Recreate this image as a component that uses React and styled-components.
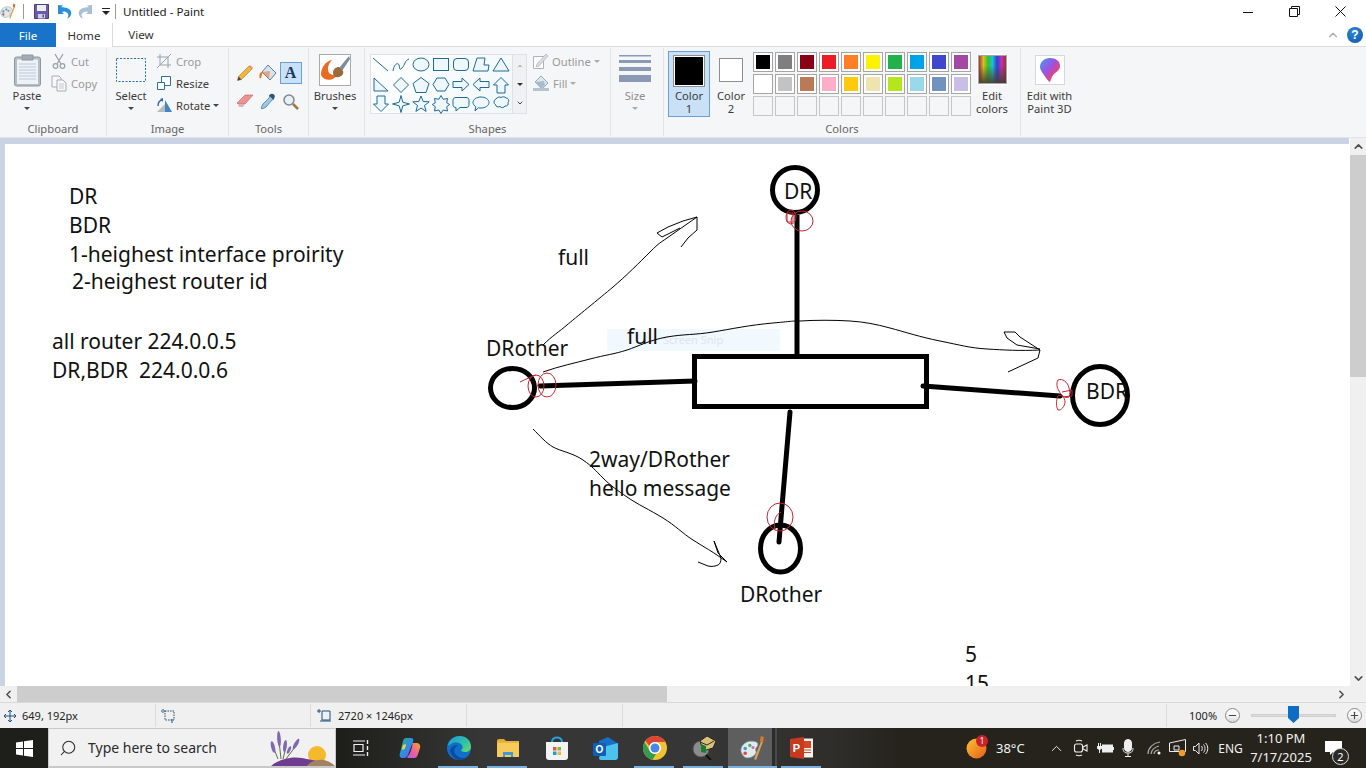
import React from "react";
import styled, { createGlobalStyle } from "styled-components";
import { ChevronUp, ChevronDown, ChevronLeft, ChevronRight, Search, Minus, Plus } from "lucide-react";

const GlobalStyle = createGlobalStyle`
  html, body { margin: 0; padding: 0; background: #fff; overflow: hidden; }
  * { box-sizing: border-box; }
  body { font-family: "Noto Sans", "Open Sans", sans-serif; font-size: 12px; color: #3b3b3b; }
`;

const UI = '"Noto Sans", "Open Sans", sans-serif';

const Window = styled.div`
  width: 1366px;
  height: 768px;
  display: flex;
  flex-direction: column;
  overflow: hidden;
`;

/* title bar */
const TitleBar = styled.div`
  height: 23px;
  display: flex;
  align-items: center;
  background: #fff;
  flex: none;
  overflow: hidden;
`;
const QuickIcon = styled.span`
  display: flex;
  width: ${(p) => p.$w}px;
  margin-left: ${(p) => p.$ml || 0}px;
  justify-content: ${(p) => (p.$clip ? "flex-end" : "center")};
  overflow: ${(p) => (p.$clip ? "hidden" : "visible")};
  flex: none;
`;
const QuickSep = styled.span`
  width: 1px;
  height: 15px;
  background: #9a9a9a;
  margin-left: ${(p) => p.$ml}px;
  flex: none;
`;
const WindowTitle = styled.span`
  margin-left: 7px;
  font-size: 11.6px;
  color: #1a1a1a;
`;
const WinControls = styled.div`
  margin-left: auto;
  padding-right: 3px;
  display: flex;
`;
const WinControl = styled.span`
  width: 46px;
  height: 23px;
  display: flex;
  align-items: center;
  justify-content: center;
`;

/* tabs */
const TabRow = styled.div`
  height: 24px;
  display: flex;
  align-items: stretch;
  background: #fff;
  border-bottom: 1px solid #dadbdc;
  flex: none;
`;
const FileTab = styled.div`
  width: 56px;
  background: #1873c9;
  color: #fff;
  display: flex;
  align-items: center;
  justify-content: center;
  margin-bottom: -1px;
  font-size: 11.6px;
`;
const Tab = styled.div`
  width: ${(p) => p.$w}px;
  display: flex;
  align-items: center;
  justify-content: center;
  color: #333;
  font-size: 11.6px;
  background: #fff;
  margin-bottom: ${(p) => (p.$active ? "-1px" : "0")};
  border-right: ${(p) => (p.$active ? "1px solid #dadbdc" : "0")};
  position: relative;
`;
const TabTools = styled.div`
  margin-left: auto;
  display: flex;
  align-items: center;
  gap: 7px;
  padding-right: 3px;
`;
const HelpBadge = styled.span`
  width: 16px;
  height: 16px;
  border-radius: 50%;
  background: radial-gradient(circle at 40% 30%, #2f86d8, #0c57a8);
  color: #fff;
  font: bold 12px "Liberation Sans", sans-serif;
  display: flex;
  align-items: center;
  justify-content: center;
`;

/* ribbon */
const Ribbon = styled.div`
  height: 91px;
  background: #f5f6f7;
  display: flex;
  flex: none;
  border-bottom: 1px solid #e2e4e7;
`;
const Group = styled.div`
  width: ${(p) => p.$w}px;
  flex: none;
  display: flex;
  flex-direction: column;
  border-right: ${(p) => (p.$plain ? "0" : "1px solid #e2e3e4")};
  margin: 1px 0;
`;
const GroupBody = styled.div`
  height: 71px;
  display: flex;
  position: relative;
`;
const GroupLabel = styled.div`
  text-align: center;
  font-size: 11.2px;
  color: #666;
  line-height: 14px;
  margin-top: 3px;
`;
const BigButton = styled.div`
  width: ${(p) => p.$w}px;
  margin-left: ${(p) => p.$ml || 0}px;
  flex: none;
  display: flex;
  flex-direction: column;
  align-items: center;
  font-size: 11.2px;
  line-height: 13px;
  color: ${(p) => (p.$muted ? "#8d8d8d" : "#3b3b3b")};
`;
const IconSlot = styled.div`
  height: 41px;
  padding-top: ${(p) => p.$pt || 0}px;
  display: flex;
  justify-content: center;
  flex: none;
`;
const Dropdown = styled.span`
  width: 0;
  height: 0;
  margin-top: ${(p) => p.$mt ?? 5}px;
  border: 3px solid transparent;
  border-top: 3px solid ${(p) => p.$color || "#444"};
  border-bottom: 0;
  display: inline-block;
  flex: none;
`;
const SmallStack = styled.div`
  display: flex;
  flex-direction: column;
  margin-left: ${(p) => p.$ml}px;
  margin-top: 2px;
`;
const SmallButton = styled.div`
  height: 22px;
  display: flex;
  align-items: center;
  gap: 3px;
  font-size: 11.2px;
  color: ${(p) => (p.$off ? "#9a9a9a" : "#3b3b3b")};
`;
const SmallIcon = styled.span`
  width: 18px;
  display: flex;
  justify-content: center;
  flex: none;
`;
const ToolGrid = styled.div`
  display: grid;
  grid-template-columns: repeat(3, 23px);
  grid-auto-rows: 28px;
  margin: 11px 0 0 4px;
  align-items: center;
  justify-items: center;
`;
const ToolCell = styled.div`
  width: 22px;
  height: 22px;
  display: flex;
  align-items: center;
  justify-content: center;
  border: 1px solid ${(p) => (p.$active ? "#6a9fd4" : "transparent")};
  background: ${(p) => (p.$active ? "#c9e0f7" : "transparent")};
`;
const ToolLetter = styled.span`
  font: bold 16px "Liberation Serif", serif;
  color: #17375e;
`;
const GalleryBox = styled.div`
  width: 157px;
  height: 60px;
  margin: 6px 0 0 5px;
  display: flex;
  border: 1px solid #dfe1e4;
  background: #fff;
  flex: none;
`;
const ShapeGrid = styled.div`
  width: 141px;
  display: grid;
  grid-template-columns: repeat(7, 20px);
  grid-auto-rows: 19.5px;
  background: linear-gradient(135deg, #fff, #f0f7fb);
`;
const GalleryScroll = styled.div`
  flex: 1;
  display: flex;
  flex-direction: column;
  align-items: center;
  justify-content: space-around;
  background: #f0f1f2;
  border-left: 1px solid #dfe1e4;
`;
const ShapeOptions = styled.div`
  margin: 2px 0 0 5px;
  display: flex;
  flex-direction: column;
`;
const ColorPick = styled.div`
  width: ${(p) => p.$w}px;
  height: 66px;
  margin-left: ${(p) => p.$ml}px;
  margin-top: 3px;
  flex: none;
  display: flex;
  flex-direction: column;
  align-items: center;
  text-align: center;
  border: 1px solid ${(p) => (p.$active ? "#6a9fd4" : "transparent")};
  background: ${(p) => (p.$active ? "#c9e0f7" : "transparent")};
  font-size: 11.2px;
  line-height: 13px;
  color: #3b3b3b;
  white-space: nowrap;
`;
const PickSwatch = styled.div`
  width: ${(p) => p.$s}px;
  height: ${(p) => p.$s}px;
  flex: none;
  margin: ${(p) => p.$m};
  background: ${(p) => p.$c};
  border: 1px solid #8e8e8e;
  ${(p) => p.$inset && "box-shadow: inset 0 0 0 1px #fff;"}
`;
const Palette = styled.div`
  display: grid;
  grid-template-columns: repeat(10, 20px);
  grid-auto-rows: 20px;
  gap: 2px;
  margin: 4px 0 0 10px;
  flex: none;
`;
const Swatch = styled.div`
  border: 1px solid ${(p) => (p.$empty ? "#c4c6c8" : "#a5a5a5")};
  background: ${(p) => (p.$empty ? "#f5f6f7" : "#fff")};
  padding: 2px;
  &::before {
    content: "";
    display: ${(p) => (p.$empty ? "none" : "block")};
    width: 100%;
    height: 100%;
    background: ${(p) => p.$c};
  }
`;
const RainbowBox = styled.div`
  width: 29px;
  height: 29px;
  border: 1px solid #a5a5a5;
  outline: 1px solid #fff;
  background:
    linear-gradient(180deg, transparent 35%, rgba(70, 60, 50, 0.9) 100%),
    linear-gradient(90deg, #b03030, #d8c020, #30c030, #20c0d0, #3040d8, #c030b0, #a03030);
`;
const CenterText = styled.div`
  text-align: center;
  font-size: 11.2px;
  line-height: 13px;
  color: #3b3b3b;
`;
const Paint3DBox = styled.div`
  width: 30px;
  height: 30px;
  border: 1px solid #d8d8d8;
  background: #fff;
  display: flex;
  align-items: center;
  justify-content: center;
`;

/* workspace */
const Workspace = styled.div`
  height: 548px;
  display: flex;
  flex: none;
  background: #c9d3e3;
`;
const CanvasView = styled.div`
  flex: 1;
  margin: 6px 0 0 5px;
  background: #fff;
  position: relative;
  overflow: hidden;
`;
const Sketch = styled.svg`
  position: absolute;
  left: 0;
  top: 0;
`;
const SnipToast = styled.div`
  position: absolute;
  left: ${607 - 5}px;
  top: ${329 - 144}px;
  width: 173px;
  height: 22px;
  background: #f1f8fe;
  color: #dbe6ef;
  font-size: 11px;
  line-height: 22px;
  padding-left: 56px;
`;
const CanvasText = styled.div`
  position: absolute;
  left: ${(p) => p.$x - 5}px;
  top: ${(p) => p.$y - 145}px;
  font-family: ${UI};
  font-size: 21px;
  line-height: 28px;
  color: #111;
  white-space: pre;
`;
const VScroll = styled.div`
  width: 17px;
  display: flex;
  flex-direction: column;
  background: #f0f0f0;
  border-left: 1px solid #fff;
  flex: none;
`;
const ScrollBtn = styled.div`
  flex: none;
  width: ${(p) => p.$w || 16}px;
  height: ${(p) => p.$h || 16}px;
  display: flex;
  align-items: center;
  justify-content: center;
  color: #505050;
`;
const VThumb = styled.div`
  height: 222px;
  background: #cdcdcd;
  flex: none;
`;
const Spring = styled.div`
  flex: 1;
`;
const HScroll = styled.div`
  height: 16px;
  flex: none;
  display: flex;
  background: #f0f0f0;
`;
const HThumb = styled.div`
  width: 650px;
  background: #cdcdcd;
  flex: none;
  margin-left: 1px;
`;

/* status bar */
const StatusBar = styled.div`
  height: 26px;
  flex: none;
  background: #f0f0f0;
  border-top: 1px solid #d9d9d9;
  display: flex;
  align-items: stretch;
  font-size: 11px;
  color: #222;
`;
const StatusCell = styled.div`
  width: ${(p) => p.$w}px;
  flex: none;
  display: flex;
  align-items: center;
  gap: 6px;
  padding-left: ${(p) => p.$pl || 0}px;
  margin: 1px 0;
  border-right: 1px solid #dcdcdc;
`;
const ZoomCell = styled.div`
  flex: 1;
  display: flex;
  align-items: center;
  padding-left: 22px;
`;
const ZoomCircle = styled.span`
  width: 15px;
  height: 15px;
  border-radius: 50%;
  border: 1px solid #8d8d8d;
  background: linear-gradient(180deg, #f8f8f8 50%, #d4d4d4);
  display: flex;
  align-items: center;
  justify-content: center;
  margin-left: ${(p) => p.$ml}px;
  flex: none;
  color: #444;
`;
const ZoomTrack = styled.div`
  width: 85px;
  height: 3px;
  margin-left: ${(p) => p.$ml}px;
  background: #dcdcdc;
  border: 1px solid #cfcfcf;
  position: relative;
  flex: none;
`;
const ZoomThumb = styled.svg`
  position: absolute;
  left: 36px;
  top: -9px;
`;

/* taskbar */
const Taskbar = styled.div`
  height: 40px;
  flex: none;
  display: flex;
  color: #f2f2f2;
  background: linear-gradient(90deg, #1e1e1a 0, #1e1e1a 340px, #363636 480px, #363636 700px, #2f2e2b 830px, #25231c 900px);
`;
const StartButton = styled.div`
  width: 48px;
  display: flex;
  align-items: center;
  justify-content: center;
  flex: none;
`;
const SearchBox = styled.div`
  width: 288px;
  flex: none;
  background: #f1f1f1;
  border: 1px solid #c8c8c8;
  border-bottom-width: 2px;
  display: flex;
  align-items: center;
  position: relative;
  overflow: hidden;
  color: #2b2b2b;
  font-size: 14px;
  padding-left: 10px;
  gap: 11px;
`;
const MirroredSearch = styled(Search)`
  transform: scaleX(-1);
`;
const SearchArt = styled.svg`
  position: absolute;
  left: 211px;
  top: 0;
`;
const TaskIcon = styled.div`
  width: 49px;
  flex: none;
  display: flex;
  align-items: center;
  justify-content: center;
  position: relative;
  background: ${(p) => (p.$active ? "linear-gradient(90deg, #5e5e5e 90%, #2c2c2c 90%, #2c2c2c 96%, #4a4a4a 96%)" : "transparent")};
  &::after {
    content: "";
    display: ${(p) => (p.$running ? "block" : "none")};
    position: absolute;
    left: ${(p) => (p.$active ? 0 : 4)}px;
    right: ${(p) => (p.$active ? 0 : 5)}px;
    bottom: 0;
    height: 2px;
    background: #76b0e4;
  }
`;
const Tray = styled.div`
  margin-left: auto;
  display: flex;
  align-items: stretch;
  flex: none;
`;
const TrayCell = styled.div`
  width: ${(p) => p.$w}px;
  flex: none;
  display: flex;
  align-items: center;
  justify-content: ${(p) => (p.$pl ? "flex-start" : "center")};
  font-size: ${(p) => p.$fs || 12}px;
  position: relative;
  text-align: center;
  line-height: 19px;
  padding-left: ${(p) => p.$pl || 0}px;
`;
const WeatherBadge = styled.span`
  position: absolute;
  left: 13px;
  top: 7px;
  width: 12px;
  height: 12px;
  border-radius: 50%;
  background: #c8252b;
  color: #fff;
  font-size: 8px;
  line-height: 12px;
  text-align: center;
`;
const NotifyBadge = styled.span`
  position: absolute;
  left: 16px;
  top: 20px;
  width: 17px;
  height: 17px;
  border-radius: 50%;
  background: #2b2a26;
  border: 1px solid #ddd;
  color: #fff;
  font-size: 11px;
  line-height: 15px;
  text-align: center;
`;

/* icons */
const PaletteIcon = ({ s = 24 }) => (
  <svg width={s} height={s} viewBox="0 0 24 24">
    <path d="M1 15c-1-5 4-10 9-10 3 0 6 0 7 2 1 3-2 4-2 6s1 2 0 4c-2 3-5 4-8 4-3 0-5-3-6-6z" fill="#dfe9ee" stroke="#7c97a8" strokeWidth=".7" />
    <circle cx="5" cy="12" r="1.700" fill="#3f9bd6" />
    <circle cx="9.500" cy="9" r="1.600" fill="#53b153" />
    <circle cx="5" cy="16.500" r="1.700" fill="#d84a3d" />
    <circle cx="12.500" cy="11" r="1.500" fill="#d56ab0" />
    <path d="M21 3l1.500 1-7 19-2-1z" fill="#e0a050" />
    <path d="M20 0l3 1-1 5-3-1z" fill="#d97832" />
  </svg>
);
const SaveIcon = () => (
  <svg width="15" height="15" viewBox="0 0 15 15">
    <path d="M.5.500h14v14H.5z" fill="#6f5aa5" stroke="#4d3d85" />
    <path d="M3 1h9v6H3z" fill="#e9eef5" />
    <path d="M4 10h7v4.500H4z" fill="#cfd0e6" />
    <path d="M8.500 10.500h1.500v3H8.500z" fill="#5b4b94" />
  </svg>
);
const UndoIcon = ({ color, flip }) => (
  <svg width="15" height="15" viewBox="0 0 15 15" transform={flip ? "scale(-1 1)" : undefined}>
    <path d="M1 1l5 .5-1.700 1.700C5.500 3 12 3 14 7.500c1 3-1 6-4 7 1.500-2 2-4 .5-5.500C9 7.500 6.500 7 5 8L7 10H1z" fill={color} />
  </svg>
);
const CutIcon = () => (
  <svg width="14" height="16" viewBox="0 0 14 16" fill="none" stroke="#98a3ad" strokeWidth="1.300">
    <path d="M3 1l6 10M11 1L5 11" />
    <circle cx="3.500" cy="13" r="2.300" />
    <circle cx="10.500" cy="13" r="2.300" />
  </svg>
);
const CopyIcon = () => (
  <svg width="16" height="17" viewBox="0 0 16 17" fill="#f8f8f8" stroke="#a7adb3">
    <path d="M1 1h7l2 2v9H1z" />
    <path d="M6 5h6l3 3v8H6z" />
    <path d="M8 9h5M8 11h5M8 13h5" stroke="#c4c8cc" />
  </svg>
);
const CropIcon = () => (
  <svg width="16" height="16" viewBox="0 0 16 16" fill="none" stroke="#98a3ad">
    <path d="M4 1v11h11M1 4h11v11M1 15L15 1" />
  </svg>
);
const ResizeIcon = () => (
  <svg width="16" height="16" viewBox="0 0 16 16" fill="#fff" stroke="#2e6ea6">
    <path d="M5.500 1.500h9v9h-9z" />
    <path d="M1.500 7.500h7v7h-7z" />
  </svg>
);
const RotateIcon = () => (
  <svg width="17" height="16" viewBox="0 0 17 16">
    <path d="M9 3l7 12H9z" fill="#3f87c4" />
    <path d="M1 15l8-8v8z" fill="#b8bcc0" />
    <path d="M2 9c0-4 2-6 5-6" stroke="#2e6ea6" fill="none" strokeWidth="1.400" />
    <path d="M4 2l3-1v4z" fill="#2e6ea6" />
  </svg>
);
const PasteIcon = () => (
  <svg width="27" height="33" viewBox="0 0 27 33">
    <rect x=".5" y="3" width="26" height="29" rx="2" fill="#b4bcc6" stroke="#8f98a3" />
    <rect x="3" y="5.500" width="21" height="24.500" fill="#eef2f7" />
    <path d="M5 10h17M5 13h17M5 16h17M5 19h17M5 22h17M5 25h17" stroke="#bcc8d8" />
    <path d="M8 1h11v5H8z" fill="#a2abb6" stroke="#8f98a3" />
  </svg>
);
const PencilIcon = () => (
  <svg width="18" height="18" viewBox="0 0 18 18">
    <path d="M13 2l3 3L5.500 15.500 1.500 16.500l1-4z" fill="#efb540" stroke="#a87a1f" strokeWidth=".6" />
    <path d="M13 2l1-1 3 3-1 1z" fill="#e58a80" />
    <path d="M1.500 16.500l1-4 3 3z" fill="#4a4a4a" />
  </svg>
);
const FillIcon = () => (
  <svg width="18" height="18" viewBox="0 0 18 18">
    <path d="M9 1l8 8-6 7-8-8z" fill="#d5e3ee" stroke="#5b7f9c" />
    <path d="M3 8c-2 0-3 2-2.500 6 1 1 2 0 2-2l1-3z" fill="#e8742c" />
    <path d="M3 8l8-1-1 8z" fill="#e8742c" opacity=".55" />
  </svg>
);
const EraserIcon = () => (
  <svg width="18" height="16" viewBox="0 0 18 16">
    <path d="M1 10l8-8h8l-8 9H2z" fill="#ee9393" stroke="#c45c5c" strokeWidth=".6" />
    <path d="M2 11h7l-2 3H3z" fill="#d8b6b6" />
  </svg>
);
const PickerIcon = () => (
  <svg width="17" height="17" viewBox="0 0 17 17">
    <path d="M11 2l4 4-2 1-6 7-4 2-1-1 2-4 6-6z" fill="#9cc8e6" stroke="#3c6f95" strokeWidth=".7" />
    <path d="M11 1.500c1-1 3-1 4 0s1 3 0 4l-1 1-4-4z" fill="#28567a" />
  </svg>
);
const LensIcon = () => (
  <svg width="17" height="17" viewBox="0 0 17 17" fill="none">
    <circle cx="7" cy="7" r="5" fill="#e7f0f7" stroke="#808890" strokeWidth="1.500" />
    <path d="M11 11l5 5" stroke="#a07840" strokeWidth="2.500" />
  </svg>
);
const BrushesIcon = () => (
  <svg width="32" height="32" viewBox="0 0 32 32">
    <rect x=".5" y=".5" width="31" height="31" fill="#fff" stroke="#a9a9a9" />
    <path d="M2 21c0-8 5-14 11-15-4 4-5 9-3 13 4 3 6 2 9 1-3 6-13 9-17 1z" fill="#ea6a22" />
    <path d="M30 2L20 14l3 3L31 5z" fill="#7d8da0" />
    <path d="M20 13c-3 0-6 2-6 6 0 3 3 5 6 4 3-1 5-3 4-6z" fill="#9a6a3c" />
  </svg>
);
const ShapeSvg = ({ children }) => (
  <svg width="20" height="20" viewBox="0 0 20 20" fill="#eef7fc" stroke="#1f6a96" strokeWidth="1">
    {children}
  </svg>
);
const SHAPES = [
  <path d="M2 3l15 13" fill="none" />,
  <path d="M2 16c1-7 5-9 6-6s0 6 3 3 3-8 7-9" fill="none" />,
  <ellipse cx="10" cy="9.500" rx="8" ry="6.500" />,
  <rect x="2.500" y="3.500" width="15" height="12" />,
  <rect x="2.500" y="3.500" width="15" height="12" rx="3.500" />,
  <path d="M2 16l4-13h8l-1 7h5l-1 6z" />,
  <path d="M10 3l8 13H2z" />,
  <path d="M3 3l14 13H3z" />,
  <path d="M10 2.500l7.500 7.500-7.500 7.500L2.500 10z" />,
  <path d="M10 2.500l8 6-3 9H5l-3-9z" />,
  <path d="M6 3h8l4 6.500-4 6.500H6L2 9.500z" />,
  <path d="M2 6.500h9V3l7 6.500-7 6.500v-3.500H2z" />,
  <path d="M18 6.500H9V3L2 9.500 9 16v-3.500h9z" />,
  <path d="M6 18V10H2.500L10 2.500 17.500 10H14v8z" />,
  <path d="M6 2v8H2.500l7.500 7.500 7.500-7.500H14V2z" />,
  <path d="M10 1.500l1.800 6.700 6.700 1.800-6.700 1.800L10 18.500l-1.800-6.700L1.500 10l6.700-1.800z" />,
  <path d="M10 2l2.200 5.500 6 .3-4.700 3.700 1.600 5.900-5.100-3.300-5.100 3.300 1.600-5.900L1.800 7.800l6-.3z" />,
  <path d="M10 1.500l2.200 3.800 4.300-.8-.8 4.300 3 1.700-3 2.200.8 4.300-4.300-1-2.200 3.500-2.200-3.500-4.300 1 .8-4.300-3-2.200 3-1.700-.8-4.300 4.300.8z" />,
  <path d="M5 3.500h10c2 0 3 1 3 3v4c0 2-1 3-3 3H9l-4 3.500v-3.500c-2 0-3-1-3-3v-4c0-2 1-3 3-3z" />,
  <path d="M10 3c4.500 0 8 2.500 8 5.500S14.500 14 10 14c-1 0-1.500 0-2.500-.3L4 17l.8-4.300C3 11.500 2 10 2 8.500 2 5.500 5.500 3 10 3z" />,
  <path d="M5 5c1-2 4-2.500 5-1.500 1.500-1 4-1 5 .5 2.500 0 3.500 3 2 4.500 1 2-1 4-3 3.500-1 2-4 2-5 .5-2 1-4.500 0-4.500-2C2.500 10 2.500 6 5 5z" />,
];
const OutlineIcon = () => (
  <svg width="17" height="17" viewBox="0 0 17 17">
    <path d="M1.500 3.500h10v12h-10z" fill="#fff" stroke="#adb4bb" />
    <path d="M14 1l2 2-9 10-3 1 1-3z" fill="#d8dde2" stroke="#a0a8b0" strokeWidth=".6" />
  </svg>
);
const FillShapeIcon = () => (
  <svg width="18" height="17" viewBox="0 0 18 17">
    <path d="M9 1l7 7-6 6-7-7z" fill="#dce6ee" stroke="#96a9b8" />
    <path d="M1 13h16v3H1z" fill="#b5c4d2" />
    <path d="M3 7l9-1 1 4-4 4z" fill="#a8bccd" />
  </svg>
);
const Paint3DIcon = () => (
  <svg width="22" height="26" viewBox="0 0 22 26">
    <defs>
      <linearGradient id="p3d" x1="0" y1="0" x2="1" y2="1">
        <stop offset="0" stopColor="#3aa0f0" />
        <stop offset=".45" stopColor="#a050e0" />
        <stop offset=".75" stopColor="#f0406a" />
        <stop offset="1" stopColor="#f5b030" />
      </linearGradient>
    </defs>
    <path d="M11 1C5 1 1 5 1 10c0 3 2 5 4 8s4 6 6 7c1-3 2-6 4-8s6-4 6-8c0-5-4-8-10-8z" fill="url(#p3d)" />
  </svg>
);

const WinLogo = () => (
  <svg width="17" height="17" viewBox="0 0 17 17" fill="#fff">
    <path d="M0 2.400L7 1.400V8H0zM8 1.300L17 0v8H8zM0 9h7v6.600L0 14.600zM8 9h9v8l-9-1.300z" />
  </svg>
);
const LavenderArt = () => (
  <SearchArt width="76" height="38" viewBox="0 0 76 38">
    <circle cx="57" cy="26" r="9" fill="#f4b92c" />
    <path d="M10 38c8-8 22-11 32-9 10 2 24 4 34 9z" fill="#6f3c92" />
    <path d="M46 38c4-6 12-8 18-7 5 1 9 4 12 7z" fill="#a3835f" />
    <path d="M18 30l-4-10M21 30l-2-18M23 30l3-12M26 30l12-16" stroke="#5f6f4a" fill="none" />
    <g fill="#7f69b4">
      <ellipse cx="13" cy="18" rx="1.900" ry="6" transform="rotate(-14 13 18)" />
      <ellipse cx="19" cy="10" rx="1.800" ry="8" transform="rotate(-4 19 10)" />
      <ellipse cx="25" cy="17" rx="1.800" ry="6" transform="rotate(8 25 17)" />
      <ellipse cx="36" cy="15" rx="1.800" ry="6" transform="rotate(30 36 15)" />
      <ellipse cx="29" cy="21" rx="1.500" ry="4" transform="rotate(24 29 21)" />
    </g>
  </SearchArt>
);
const TaskViewIcon = () => (
  <svg width="16" height="16" viewBox="0 0 16 16" fill="none" stroke="#f0f0f0" strokeWidth="1.200">
    <path d="M0 1h12M0 15h12M1 4.500h9v7H1z" />
    <path d="M14.500 0v4M14.500 6v4M14.500 12v4" strokeWidth="1.400" />
  </svg>
);
const CopilotIcon = () => (
  <svg width="22" height="22" viewBox="0 0 22 22">
    <defs>
      <linearGradient id="cpA" x1="0" y1="0" x2="1" y2="1">
        <stop offset="0" stopColor="#2fb06a" />
        <stop offset=".5" stopColor="#2b8fe8" />
        <stop offset="1" stopColor="#7a55d8" />
      </linearGradient>
      <linearGradient id="cpB" x1="1" y1="0" x2="0" y2="1">
        <stop offset="0" stopColor="#f5a623" />
        <stop offset=".55" stopColor="#ef5fa0" />
        <stop offset="1" stopColor="#b25ae0" />
      </linearGradient>
    </defs>
    <path d="M7 1h5c2 0 3 2 2 4L9 18c-1 2-2 3-4 3H4c-3 0-4-2-3-5L4 4c.5-2 1.500-3 3-3z" fill="url(#cpA)" />
    <path d="M13 6h4c3 0 5 2 4 5l-2 6c-1 3-2 4-4 4H9c-1 0-1-1 0-2 2-2 3-6 4-9l.5-3z" fill="url(#cpB)" />
    <path d="M4 8c2-1 3-1 3 0l-1 3c-1 2-3 2-3 1z" fill="#f3d33a" />
  </svg>
);
const EdgeIcon = () => (
  <svg width="24" height="24" viewBox="0 0 24 24">
    <defs>
      <linearGradient id="edgeTop" x1="0" y1="0" x2="1" y2="1">
        <stop offset="0" stopColor="#1b9ad6" />
        <stop offset=".6" stopColor="#33c4a0" />
        <stop offset="1" stopColor="#6fdc60" />
      </linearGradient>
    </defs>
    <circle cx="12" cy="12" r="12" fill="#0f6fcb" />
    <path d="M1 9C3 3 8 0 13 0c6 0 11 4 11 11 0 3-3 5-6 5-2 0-4-1-4-2 2-1 2-3 1-5-2-3-8-4-11-1-2 1-3 2-3 1z" fill="url(#edgeTop)" />
    <path d="M9 19c-3-3-2-8 2-10-4 0-7 2-8 6 1 4 5 9 10 9 3 0 5-1 7-3-4 2-8 1-11-2z" fill="#0c4a9c" />
  </svg>
);
const FolderIcon = () => (
  <svg width="22" height="18" viewBox="0 0 22 18">
    <path d="M0 2c0-1 .5-2 2-2h5l2 2H0z" fill="#e0a92c" />
    <path d="M0 2h22v16H0z" fill="#f6cb5a" />
    <path d="M6 13h10v5h-2v-2H8v2H6z" fill="#3d9ad8" />
    <path d="M0 2h22v2H0z" fill="#e8b33c" />
  </svg>
);
const StoreIcon = () => (
  <svg width="24" height="24" viewBox="0 0 24 24">
    <path d="M7 6c0-6 10-6 10 0" fill="none" stroke="#27a4d8" strokeWidth="2" />
    <path d="M1 6h22v15c0 2-1 3-3 3H4c-2 0-3-1-3-3z" fill="#f3f3f3" />
    <path d="M8 11h3.500v3.500H8z" fill="#e85c3a" />
    <path d="M12.500 11H16v3.500h-3.500z" fill="#7fba3c" />
    <path d="M8 15.500h3.500V19H8z" fill="#1d9ae0" />
    <path d="M12.500 15.500H16V19h-3.500z" fill="#f5b82a" />
  </svg>
);
const OutlookIcon = () => (
  <svg width="25" height="23" viewBox="0 0 25 23">
    <path d="M6 4l9-4 9 6v13H6z" fill="#1770c8" />
    <path d="M10 10l15-4v14c0 2-1 3-3 3H8c-1 0-2-1-2-2z" fill="#4cc2ee" />
    <rect x="0" y="6" width="13" height="13" rx="1" fill="#0e5fb4" />
    <text x="6.500" y="16" textAnchor="middle" fontFamily="Liberation Sans" fontSize="10" fontWeight="700" fill="#fff">O</text>
  </svg>
);
const ChromeIcon = () => (
  <svg width="24" height="24" viewBox="0 0 24 24">
    <circle cx="12" cy="12" r="12" fill="#f0c22e" />
    <path d="M12 0a12 12 0 0 1 10.400 6H12a6 6 0 0 0-5.600 4L2.300 4.800A12 12 0 0 1 12 0z" fill="#db4437" />
    <path d="M1.500 6L6.800 15a6 6 0 0 0 6.200 3l-3.600 5.700A12 12 0 0 1 1.500 6z" fill="#2f9e4f" />
    <circle cx="12" cy="12" r="6" fill="#fff" />
    <circle cx="12" cy="12" r="4.500" fill="#4a86e8" />
  </svg>
);
const ScannerIcon = () => (
  <svg width="24" height="24" viewBox="0 0 24 24">
    <circle cx="9" cy="13" r="8" fill="#8c8c8c" stroke="#555" />
    <path d="M8 5l7-5 9 5-3 7-10 3z" fill="#d9c07c" stroke="#2a2a1c" />
    <path d="M8 6l7 3 7-4" fill="none" stroke="#2a2a1c" />
    <path d="M9 8l5 2v7l-5-1z" fill="#1d7b32" />
    <path d="M14 19l5 5" stroke="#111" strokeWidth="2" />
  </svg>
);
const PptIcon = () => (
  <svg width="23" height="22" viewBox="0 0 23 22">
    <rect x="8" y="1.500" width="15" height="19" fill="#f4f0ee" />
    <path d="M14 4h7v7h-7z" fill="#d24726" />
    <path d="M14 13h7M14 15.500h7" stroke="#d24726" />
    <path d="M0 2l14-2v22L0 20z" fill="#c8391d" />
    <text x="6.500" y="15" textAnchor="middle" fontFamily="Liberation Sans" fontSize="11" fontWeight="700" fill="#fff">P</text>
  </svg>
);
const MeetIcon = () => (
  <svg width="16" height="18" viewBox="0 0 16 18" fill="none" stroke="#eee" strokeWidth="1.100">
    <rect x="1.500" y="5" width="8" height="8" rx="2" />
    <path d="M10 8l4-2v6l-4-2zM3 2c2-1 4-1 6 0M3 16c2 1 4 1 6 0" />
  </svg>
);
const PowerIcon = () => (
  <svg width="17" height="12" viewBox="0 0 17 12" fill="#eee">
    <path d="M5 2.500h11v8H5zM16 5h1v3h-1z" />
    <path d="M0 4h1V1h1v3h1V1h1v3h1v2.500L3 8v3H2V8L0 6.500z" />
  </svg>
);
const MicIcon = () => (
  <svg width="12" height="18" viewBox="0 0 12 18" fill="none" stroke="#eee">
    <rect x="2.500" y="0.500" width="7" height="12" rx="3.500" fill="#eee" />
    <path d="M1 9c0 4 2 5 5 5s5-1 5-5M6 14v3M3 17.500h6" />
  </svg>
);
const WifiIcon = () => (
  <svg width="15" height="14" viewBox="0 0 15 14" fill="none" stroke="#aaa" strokeWidth="1.200">
    <path d="M1 13C1 7 6 2 13 1M4 13c0-4 4-7 8-8M7 13c0-2 2-4 5-4" />
    <circle cx="12" cy="12" r="1.500" fill="#fff" stroke="none" />
  </svg>
);
const MonitorIcon = () => (
  <svg width="18" height="19" viewBox="0 0 18 19">
    <path d="M.5 4L16.500.5v12H.5z" fill="none" stroke="#eee" />
    <path d="M5 7h5v4H5z" fill="none" stroke="#eee" />
    <circle cx="13" cy="14" r="3.300" fill="#f59a23" />
  </svg>
);
const VolumeIcon = () => (
  <svg width="16" height="13" viewBox="0 0 16 13" fill="none" stroke="#eee">
    <path d="M.5 4.500h2L6 1v11L2.500 8.500h-2zM8.500 4c1 1 1 4 0 5M10.500 2.500c2 2 2 6 0 8M12.500 1c3 3 3 8 0 11" />
  </svg>
);

const PALETTE = [
  "#000000", "#7f7f7f", "#880015", "#ed1c24", "#ff7f27", "#fff200", "#22b14c", "#00a2e8", "#3f48cc", "#a349a4",
  "#ffffff", "#c3c3c3", "#b97a57", "#ffaec9", "#ffc90e", "#efe4b0", "#b5e61d", "#99d9ea", "#7092be", "#c8bfe7",
];

const RED = "#c5262d";

const Drawing = () => (
  <Sketch width="1344" height="542" viewBox="5 144 1344 542">
    <g fill="none" stroke="#000" strokeWidth="5">
      <circle cx="795" cy="190" r="22.500" />
      <path d="M797 215V357" />
      <rect x="694.500" y="356.500" width="232" height="50" />
      <ellipse cx="512.500" cy="388" rx="22" ry="19.500" />
      <path d="M540 386L695 381" strokeLinecap="round" />
      <ellipse cx="1100" cy="395.500" rx="27.500" ry="29" />
      <path d="M923 386L1060 396" strokeLinecap="round" />
      <path d="M790 412L779 542" strokeLinecap="round" />
      <ellipse cx="780.500" cy="548.500" rx="20" ry="23.500" />
    </g>
    <g fill="none" stroke="#000" strokeWidth="1" strokeLinejoin="round">
      <path d="M543 345C552 336 560 331 567 325S600 298 613 287S640 262 650 252S660 243 667 238L697 217V230L688 238L681 247" />
      <path d="M697 217L683 221L668 227L657 233L662 237L680 228" />
      <path d="M543 372C560 366 575 363 590 359S615 354 627 350S650 340 667 337S695 335 713 332S750 325 773 323S790 321 800 321C815 320 835 320 850 321S875 324 890 328S920 337 940 341S970 348 987 349S1020 351 1040 350" />
      <path d="M1040 350L1020 337L1015 332H1004L1007 338L1017 345L1040 349M1040 350L1038 358L1008 372" />
      <path d="M533 429C540 436 546 443 553 447S573 453 583 460S595 470 603 478S617 490 627 497S650 510 663 518S682 533 693 540S708 549 717 555L727 562L718 553L714 541L721 558C721 562 720 564 718 565S712 567 708 566L698 562" />
    </g>
    <g fill="none" stroke={RED} strokeWidth="1">
      <ellipse cx="547" cy="385" rx="9" ry="12" />
      <ellipse cx="536" cy="386" rx="8" ry="11" />
      <path d="M520 382C526 379 531 377 536 375" />
      <ellipse cx="802" cy="221" rx="11" ry="10" />
      <ellipse cx="791" cy="217" rx="5" ry="7" />
      <path d="M787 213h6v9h-6z" />
      <ellipse cx="780" cy="517" rx="13" ry="14" />
      <path d="M775 530c-2-8 0-15 6-18" />
      <path d="M1058 380c4-2 10 2 11 8 1 3 1 6 0 9-4 2-8-2-10-6-2-3-3-8-1-11z" />
      <path d="M1058 396c3-2 7 1 7 6 0 4-4 9-7 8-2-3-2-10 0-14zM1062 392l10-2v6l-10 1" />
    </g>
  </Sketch>
);

const CANVAS_TEXT = [
  ["DR", 69, 183], ["BDR", 69, 212], ["1-heighest interface proirity", 69, 241], ["2-heighest router id", 72, 268],
  ["all router 224.0.0.5", 52, 328], ["DR,BDR  224.0.0.6", 52, 357], ["full", 558, 244], ["full", 627, 323],
  ["DRother", 486, 335], ["DR", 784, 178], ["BDR", 1086, 378], ["2way/DRother", 589, 446], ["hello message", 589, 475],
  ["DRother", 740, 581], ["5", 965, 641], ["15", 965, 670],
];

export default function App() {
  return (
    <Window>
      <GlobalStyle />
      <TitleBar>
        <QuickIcon $w={16} $clip><PaletteIcon s={19} /></QuickIcon>
        <QuickSep $ml={7} />
        <QuickIcon $w={15} $ml={10}><SaveIcon /></QuickIcon>
        <QuickIcon $w={15} $ml={8}><UndoIcon color="#2a8fd8" /></QuickIcon>
        <QuickIcon $w={15} $ml={6}><UndoIcon color="#a9bfd2" flip /></QuickIcon>
        <QuickIcon $w={10} $ml={8}>
          <svg width="8" height="7" viewBox="0 0 8 7"><path d="M0 0h8v1H0zM0 3h8L4 7z" fill="#222" /></svg>
        </QuickIcon>
        <QuickSep $ml={4} />
        <WindowTitle>Untitled - Paint</WindowTitle>
        <WinControls>
          <WinControl>
            <svg width="10" height="10" viewBox="0 0 10 10"><path d="M0 5.500h10" stroke="#111" /></svg>
          </WinControl>
          <WinControl>
            <svg width="11" height="11" viewBox="0 0 11 11" fill="none" stroke="#111"><path d="M.5 2.500h8v8h-8zM2.500 2.500v-2h8v8h-2" /></svg>
          </WinControl>
          <WinControl>
            <svg width="11" height="11" viewBox="0 0 11 11" stroke="#111"><path d="M.5.500l10 10M10.500.500l-10 10" /></svg>
          </WinControl>
        </WinControls>
      </TitleBar>

      <TabRow>
        <FileTab>File</FileTab>
        <Tab $w={57} $active>Home</Tab>
        <Tab $w={56}>View</Tab>
        <TabTools>
          <ChevronUp size={14} color="#aaa" />
          <HelpBadge>?</HelpBadge>
        </TabTools>
      </TabRow>

      <Ribbon>
        <Group $w={107}>
          <GroupBody>
            <BigButton $w={54}>
              <IconSlot $pt={6}><PasteIcon /></IconSlot>
              Paste
              <Dropdown />
            </BigButton>
            <SmallStack $ml={-4}>
              <SmallButton $off><SmallIcon><CutIcon /></SmallIcon>Cut</SmallButton>
              <SmallButton $off><SmallIcon><CopyIcon /></SmallIcon>Copy</SmallButton>
            </SmallStack>
          </GroupBody>
          <GroupLabel>Clipboard</GroupLabel>
        </Group>
        <Group $w={122}>
          <GroupBody>
            <BigButton $w={40} $ml={4}>
              <IconSlot $pt={10}>
                <svg width="30" height="24" viewBox="0 0 30 24" fill="none"><rect x=".5" y=".5" width="29" height="23" stroke="#2e6ea6" strokeDasharray="2 1.500" /></svg>
              </IconSlot>
              Select
              <Dropdown />
            </BigButton>
            <SmallStack $ml={4}>
              <SmallButton $off><SmallIcon><CropIcon /></SmallIcon>Crop</SmallButton>
              <SmallButton><SmallIcon><ResizeIcon /></SmallIcon>Resize</SmallButton>
              <SmallButton>
                <SmallIcon><RotateIcon /></SmallIcon>Rotate
                <Dropdown $mt={0} />
              </SmallButton>
            </SmallStack>
          </GroupBody>
          <GroupLabel>Image</GroupLabel>
        </Group>
        <Group $w={80}>
          <GroupBody>
            <ToolGrid>
              <ToolCell><PencilIcon /></ToolCell>
              <ToolCell><FillIcon /></ToolCell>
              <ToolCell $active><ToolLetter>A</ToolLetter></ToolCell>
              <ToolCell><EraserIcon /></ToolCell>
              <ToolCell><PickerIcon /></ToolCell>
              <ToolCell><LensIcon /></ToolCell>
            </ToolGrid>
          </GroupBody>
          <GroupLabel>Tools</GroupLabel>
        </Group>
        <Group $w={56}>
          <GroupBody>
            <BigButton $w={52}>
              <IconSlot $pt={6}><BrushesIcon /></IconSlot>
              Brushes
              <Dropdown />
            </BigButton>
          </GroupBody>
        </Group>
        <Group $w={246}>
          <GroupBody>
            <GalleryBox>
              <ShapeGrid>
                {SHAPES.map((s, i) => <ShapeSvg key={i}>{s}</ShapeSvg>)}
              </ShapeGrid>
              <GalleryScroll>
                <ChevronUp size={8} color="#bbb" fill="#bbb" strokeWidth={3} />
                <Dropdown $mt={0} $color="#333" />
                <ChevronDown size={8} color="#444" strokeWidth={3} />
              </GalleryScroll>
            </GalleryBox>
            <ShapeOptions>
              <SmallButton $off>
                <OutlineIcon />Outline<Dropdown $mt={0} $color="#aaa" />
              </SmallButton>
              <SmallButton $off>
                <FillShapeIcon />Fill<Dropdown $mt={0} $color="#aaa" />
              </SmallButton>
            </ShapeOptions>
          </GroupBody>
          <GroupLabel>Shapes</GroupLabel>
        </Group>
        <Group $w={53}>
          <GroupBody>
            <BigButton $w={48} $muted>
              <IconSlot $pt={7}>
                <svg width="32" height="27" viewBox="0 0 32 27">
                  <path d="M0 0h32v1.500H0z" fill="#8a9ab5" />
                  <path d="M0 5h32v3H0z" fill="#8a9ab5" />
                  <path d="M0 12h32v4H0z" fill="#8a9ab5" />
                  <path d="M0 20h32v7H0z" fill="#8a9ab5" />
                </svg>
              </IconSlot>
              Size
              <Dropdown $color="#aaa" />
            </BigButton>
          </GroupBody>
        </Group>
        <Group $w={357}>
          <GroupBody>
            <ColorPick $w={42} $ml={4} $active>
              <PickSwatch $s={32} $m="3px 0 2px" $c="#000" $inset />
              Color<br />1
            </ColorPick>
            <ColorPick $w={24} $ml={9}>
              <PickSwatch $s={24} $m="6px 0 7px" $c="#fff" />
              Color<br />2
            </ColorPick>
            <Palette>
              {PALETTE.map((c) => <Swatch key={c} $c={c} />)}
              {Array.from({ length: 10 }, (_, i) => <Swatch key={i} $empty />)}
            </Palette>
            <BigButton $w={40} $ml={1}>
              <IconSlot $pt={7}><RainbowBox /></IconSlot>
              <CenterText>Edit<br />colors</CenterText>
            </BigButton>
          </GroupBody>
          <GroupLabel>Colors</GroupLabel>
        </Group>
        <Group $w={65} $plain>
          <GroupBody>
            <BigButton $w={57}>
              <IconSlot $pt={7}><Paint3DBox><Paint3DIcon /></Paint3DBox></IconSlot>
              <CenterText>Edit with<br />Paint 3D</CenterText>
            </BigButton>
          </GroupBody>
        </Group>
      </Ribbon>

      <Workspace>
        <CanvasView>
          <SnipToast>Screen Snip</SnipToast>
          <Drawing />
          {CANVAS_TEXT.map(([t, x, y], i) => <CanvasText key={i} $x={x} $y={y}>{t}</CanvasText>)}
        </CanvasView>
        <VScroll>
          <ScrollBtn $h={17}><ChevronUp size={13} strokeWidth={3} /></ScrollBtn>
          <VThumb />
          <Spring />
          <ScrollBtn $h={16}><ChevronDown size={13} strokeWidth={3} /></ScrollBtn>
        </VScroll>
      </Workspace>

      <HScroll>
        <ScrollBtn><ChevronLeft size={13} strokeWidth={3} /></ScrollBtn>
        <HThumb />
        <Spring />
        <ScrollBtn $w={17}><ChevronRight size={13} strokeWidth={3} /></ScrollBtn>
        <ScrollBtn />
      </HScroll>

      <StatusBar>
        <StatusCell $w={156} $pl={4}>
          <svg width="12" height="12" viewBox="0 0 12 12" stroke="#1f4f7a"><path d="M6 0v12M0 6h12" /><path d="M4 2l2-2 2 2M4 10l2 2 2-2M2 4L0 6l2 2M10 4l2 2-2 2" fill="none" /></svg>
          649, 192px
        </StatusCell>
        <StatusCell $w={155} $pl={5}>
          <svg width="14" height="14" viewBox="0 0 14 14" fill="none" stroke="#1f4f7a"><path d="M2 0v4M0 2h4M4 2h9v9H4z" strokeDasharray="1.500 1" /><path d="M11 10v4" /></svg>
        </StatusCell>
        <StatusCell $w={156} $pl={6}>
          <svg width="15" height="14" viewBox="0 0 15 14" fill="none" stroke="#1f4f7a"><path d="M2 0v4M0 2h4M5 2h8v9H5zM3 12h11" /></svg>
          2720 × 1246px
        </StatusCell>
        <StatusCell $w={156} />
        <StatusCell $w={544} />
        <ZoomCell>
          100%
          <ZoomCircle $ml={8}><Minus size={11} strokeWidth={2.5} /></ZoomCircle>
          <ZoomTrack $ml={11}>
            <ZoomThumb width="11" height="17" viewBox="0 0 11 17"><path d="M0 0h11v12l-5.500 5L0 12z" fill="#0f6cc4" /></ZoomThumb>
          </ZoomTrack>
          <ZoomCircle $ml={11}><Plus size={11} strokeWidth={2.5} /></ZoomCircle>
        </ZoomCell>
      </StatusBar>

      <Taskbar>
        <StartButton><WinLogo /></StartButton>
        <SearchBox>
          <MirroredSearch size={18} strokeWidth={1.4} />
          Type here to search
          <LavenderArt />
        </SearchBox>
        <TaskIcon><TaskViewIcon /></TaskIcon>
        <TaskIcon><CopilotIcon /></TaskIcon>
        <TaskIcon $running><EdgeIcon /></TaskIcon>
        <TaskIcon $running><FolderIcon /></TaskIcon>
        <TaskIcon><StoreIcon /></TaskIcon>
        <TaskIcon><OutlookIcon /></TaskIcon>
        <TaskIcon $running><ChromeIcon /></TaskIcon>
        <TaskIcon $running><ScannerIcon /></TaskIcon>
        <TaskIcon $running $active><PaletteIcon s={25} /></TaskIcon>
        <TaskIcon $running><PptIcon /></TaskIcon>
        <Tray>
          <TrayCell $w={26}>
            <svg width="21" height="21" viewBox="0 0 21 21"><defs><linearGradient id="wx" x1="0" y1="0" x2="1" y2="1"><stop offset="0" stopColor="#f9c52f" /><stop offset="1" stopColor="#e85a1c" /></linearGradient></defs><circle cx="10.500" cy="10.500" r="10" fill="url(#wx)" /></svg>
            <WeatherBadge>1</WeatherBadge>
          </TrayCell>
          <TrayCell $w={55} $fs={13} $pl={7}>38°C</TrayCell>
          <TrayCell $w={25}><ChevronUp size={17} strokeWidth={1.3} /></TrayCell>
          <TrayCell $w={24}><MeetIcon /></TrayCell>
          <TrayCell $w={24}><PowerIcon /></TrayCell>
          <TrayCell $w={22}><MicIcon /></TrayCell>
          <TrayCell $w={30}><WifiIcon /></TrayCell>
          <TrayCell $w={18}><MonitorIcon /></TrayCell>
          <TrayCell $w={28}><VolumeIcon /></TrayCell>
          <TrayCell $w={31}>ENG</TrayCell>
          <TrayCell $w={70} $fs={13}>1:10 PM<br />7/17/2025</TrayCell>
          <TrayCell $w={34}>
            <svg width="17" height="15" viewBox="0 0 17 15" fill="#fff"><path d="M0 0h17v11H8l-3 3v-3H0z" /></svg>
            <NotifyBadge>2</NotifyBadge>
          </TrayCell>
          <TrayCell $w={16} />
        </Tray>
      </Taskbar>
    </Window>
  );
}
